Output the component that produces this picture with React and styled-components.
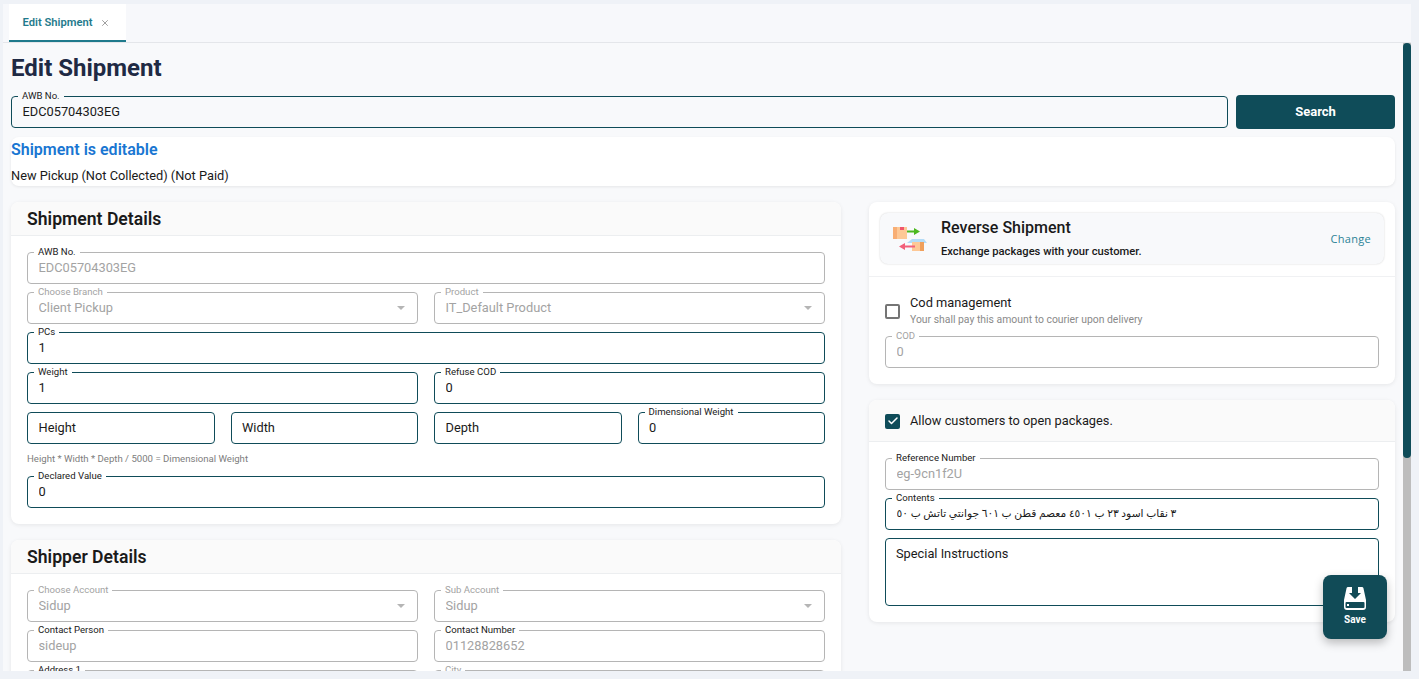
import React from 'react';
import styled, { createGlobalStyle } from 'styled-components';
import { X, Check } from 'lucide-react';

const GlobalStyle = createGlobalStyle`
  html, body {
    margin: 0;
    height: 100%;
    overflow: hidden;
    background: #eff2f7;
    font-family: Roboto, "Liberation Sans", sans-serif;
    color: #1a1a1a;
  }
  * { box-sizing: border-box; }
`;

function OutlinedField({ label, value, placeholder, disabled, select, darkLabel, arabic }) {
  return (
    <Field $disabled={disabled} $plain={!label}>
      {label && <Legend $disabled={disabled} $dark={darkLabel}>{label}</Legend>}
      <Input
        readOnly
        value={value || ''}
        placeholder={placeholder}
        $disabled={disabled}
        $plain={!label}
        $arabic={arabic}
      />
      {select && <Caret />}
    </Field>
  );
}

function ReverseIcon() {
  return (
    <svg width="36" height="28" viewBox="0 0 36 28">
      <rect x="1" y="2" width="14" height="12" fill="#fdc896" />
      <rect x="1" y="2" width="4" height="12" fill="#f8ae74" />
      <rect x="8" y="2" width="4" height="3" fill="#f0566b" />
      <path d="M15 5.5h7V3l6 3.5-6 3.500V7.500h-7z" fill="#4cb81f" />
      <path d="M20 14h12l3 4H15z" fill="#b4dcf7" />
      <rect x="20" y="17" width="12" height="9" fill="#fdc896" />
      <rect x="28" y="17" width="4" height="9" fill="#f0a05c" />
      <path d="M23 20.500h-10V18l-6 3.500 6 3.500v-2.500h10z" fill="#f2607a" />
    </svg>
  );
}

function SaveIcon() {
  return (
    <svg width="22" height="23" viewBox="0 0 22 23">
      <path
        d="M4 0h4v6H5l6 6 6-6h-3V0h4q1 0 1.400 1L22 13v7a3 3 0 0 1-3 3H3a3 3 0 0 1-3-3v-7L2.600 1Q3 0 4 0z"
        fill="#fff"
      />
      <rect x="1.500" y="15" width="19" height="6" rx="1" fill="#114b57" />
      <rect x="3" y="17" width="2" height="2" fill="#fff" />
    </svg>
  );
}

export default function App() {
  return (
    <>
      <GlobalStyle />
      <Frame>
        <TabBar>
          <Tab>
            Edit Shipment
            <X size={10} color="#666" strokeWidth={1.5} />
          </Tab>
        </TabBar>
        <Main>
          <Scroller>
            <Title>Edit Shipment</Title>
            <SearchRow>
              <OutlinedField label="AWB No." value="EDC05704303EG" darkLabel />
              <SearchButton>Search</SearchButton>
            </SearchRow>
            <StatusCard>
              <StatusTitle>Shipment is editable</StatusTitle>
              <StatusText>New Pickup (Not Collected) (Not Paid)</StatusText>
            </StatusCard>

            <Columns>
              <Column>
                <Card>
                  <CardHeader>Shipment Details</CardHeader>
                  <CardBody>
                    <OutlinedField label="AWB No." value="EDC05704303EG" disabled darkLabel />
                    <Two>
                      <OutlinedField label="Choose Branch" value="Client Pickup" disabled select />
                      <OutlinedField label="Product" value="IT_Default Product" disabled select />
                    </Two>
                    <OutlinedField label="PCs" value="1" darkLabel />
                    <Two>
                      <OutlinedField label="Weight" value="1" darkLabel />
                      <OutlinedField label="Refuse COD" value="0" darkLabel />
                    </Two>
                    <Four>
                      <OutlinedField placeholder="Height" />
                      <OutlinedField placeholder="Width" />
                      <OutlinedField placeholder="Depth" />
                      <OutlinedField label="Dimensional Weight" value="0" darkLabel />
                    </Four>
                    <HelpText>Height * Width * Depth / 5000 = Dimensional Weight</HelpText>
                    <OutlinedField label="Declared Value" value="0" darkLabel />
                  </CardBody>
                </Card>

                <Card>
                  <CardHeader>Shipper Details</CardHeader>
                  <CardBody>
                    <Two>
                      <OutlinedField label="Choose Account" value="Sidup" disabled select />
                      <OutlinedField label="Sub Account" value="Sidup" disabled select />
                    </Two>
                    <Two>
                      <OutlinedField label="Contact Person" value="sideup" disabled darkLabel />
                      <OutlinedField label="Contact Number" value="01128828652" disabled darkLabel />
                    </Two>
                    <Two>
                      <OutlinedField label="Address 1" disabled darkLabel />
                      <OutlinedField label="City" disabled />
                    </Two>
                  </CardBody>
                </Card>
              </Column>

              <Column>
                <Card>
                  <ReverseWrap>
                    <ReversePanel>
                      <IconSlot><ReverseIcon /></IconSlot>
                      <ReverseText>
                        <ReverseTitle>Reverse Shipment</ReverseTitle>
                        <ReverseSub>Exchange packages with your customer.</ReverseSub>
                      </ReverseText>
                      <ChangeLink>Change</ChangeLink>
                    </ReversePanel>
                  </ReverseWrap>
                  <CodBody>
                    <CheckRow>
                      <CheckBox />
                      <div>
                        <CheckLabel>Cod management</CheckLabel>
                        <CheckHint>Your shall pay this amount to courier upon delivery</CheckHint>
                      </div>
                    </CheckRow>
                    <OutlinedField label="COD" value="0" disabled />
                  </CodBody>
                </Card>

                <Card>
                  <AllowHeader>
                    <CheckBox $checked>
                      <Check size={12} color="#fff" strokeWidth={3} />
                    </CheckBox>
                    <CheckLabel>Allow customers to open packages.</CheckLabel>
                  </AllowHeader>
                  <CardBody>
                    <OutlinedField label="Reference Number" value="eg-9cn1f2U" disabled darkLabel />
                    <OutlinedField
                      label="Contents"
                      value="٣ نقاب اسود ٢٣ ب ٤٥٠١ معصم قطن ب ٦٠١ جوانتي تاتش ب ٥٠"
                      darkLabel
                      arabic
                    />
                    <TextArea readOnly placeholder="Special Instructions" />
                  </CardBody>
                </Card>
              </Column>
            </Columns>
          </Scroller>
          <ScrollTrack>
            <ScrollThumb />
          </ScrollTrack>
        </Main>
        <SaveButton>
          <SaveIcon />
          Save
        </SaveButton>
      </Frame>
    </>
  );
}

const Frame = styled.div`
  position: relative;
  height: 679px;
  padding: 4px 8px 8px 3px;
  display: flex;
  flex-direction: column;
`;

const TabBar = styled.div`
  flex: 0 0 38px;
  display: flex;
  padding-left: 6px;
  background: #f7f8fb;
  border-bottom: 1px solid #e4e6ea;
`;

const Tab = styled.div`
  width: 117px;
  height: 38px;
  display: flex;
  align-items: center;
  justify-content: center;
  gap: 8px;
  padding: 1px 2px 0 0;
  background: #fff;
  border-bottom: 2px solid #1f7a8c;
  color: #1f7a8c;
  font-size: 11.2px;
  font-weight: 600;
`;

const Main = styled.div`
  flex: 1;
  min-height: 0;
  display: flex;
`;

const Scroller = styled.div`
  flex: 1;
  min-width: 0;
  overflow: hidden;
  padding: 0 8px;
  background: #f8f9fb;
`;

const ScrollTrack = styled.div`
  flex: 0 0 8px;
  background: #bdbdbd;
`;

const ScrollThumb = styled.div`
  height: 415px;
  background: #0f4c59;
  border-radius: 4px;
`;

const Title = styled.h1`
  margin: 0;
  height: 48px;
  padding-top: 2px;
  display: flex;
  align-items: center;
  font-size: 24px;
  font-weight: 700;
  color: #1f2a44;
`;

const SearchRow = styled.div`
  display: grid;
  grid-template-columns: 1fr 159px;
  gap: 8px;
  align-items: end;
`;

const SearchButton = styled.button`
  height: 34px;
  margin-bottom: -1px;
  padding: 0 0 2px;
  border: none;
  border-radius: 4px;
  background: #0f4c59;
  color: #fff;
  font-family: inherit;
  font-size: 13px;
  font-weight: 700;
`;

const Field = styled.fieldset`
  position: relative;
  min-width: 0;
  height: ${(p) => (p.$plain ? '32px' : '37px')};
  margin: ${(p) => (p.$plain ? '5px 0 0' : '0')};
  padding: 0 10px;
  background: transparent;
  border: 1px solid ${(p) => (p.$disabled ? '#b5b5b5' : '#0f4c59')};
  border-radius: 4px;
`;

const Legend = styled.legend`
  height: 11px;
  margin-left: -4px;
  padding: 0 4px;
  font-size: 9.6px;
  line-height: 9px;
  color: ${(p) => (p.$disabled && !p.$dark ? '#a3a3a3' : '#1a1a1a')};
`;

const Input = styled.input`
  display: block;
  width: 100%;
  height: 30px;
  margin-top: ${(p) => (p.$plain ? '-1px' : '-6px')};
  padding: 0 0 0 0.5px;
  border: none;
  outline: none;
  background: transparent;
  font-family: Roboto, "DejaVu Sans", sans-serif;
  font-size: ${(p) => (p.$arabic ? '10.7px' : '12.8px')};
  color: ${(p) => (p.$disabled ? '#a3a3a3' : '#1a1a1a')};

  &::placeholder {
    color: #1a1a1a;
    opacity: 1;
  }
`;

const Caret = styled.span`
  position: absolute;
  right: 12px;
  top: 8px;
  border-left: 4px solid transparent;
  border-right: 4px solid transparent;
  border-top: 4px solid #b5b5b5;
`;

const StatusCard = styled.div`
  margin-top: 9px;
  height: 49px;
  background: #fff;
  border-radius: 8px;
  box-shadow: 0 1px 3px rgba(0, 0, 0, 0.08);
`;

const StatusTitle = styled.div`
  height: 26px;
  line-height: 26px;
  font-size: 16px;
  font-weight: 600;
  color: #1976d2;
`;

const StatusText = styled.div`
  line-height: 20px;
  margin-top: 3px;
  font-size: 12.8px;
`;

const Columns = styled.div`
  display: grid;
  grid-template-columns: 830px 526px;
  gap: 28px;
  margin-top: 16px;
  align-items: start;
`;

const Column = styled.div`
  display: flex;
  flex-direction: column;
  gap: 16px;
`;

const Card = styled.section`
  background: #fff;
  border-radius: 8px;
  box-shadow: 0 1px 4px rgba(0, 0, 0, 0.08);
  overflow: hidden;
`;

const CardHeader = styled.h2`
  margin: 0;
  height: 34px;
  padding-left: 16px;
  display: flex;
  align-items: center;
  background: #fafafa;
  border-bottom: 1px solid #eceef0;
  font-size: 17.6px;
  font-weight: 600;
`;

const CardBody = styled.div`
  display: flex;
  flex-direction: column;
  gap: 3px;
  padding: 11px 16px 16px;
`;

const Two = styled.div`
  display: grid;
  grid-template-columns: 1fr 1fr;
  gap: 16px;
`;

const Four = styled.div`
  display: grid;
  grid-template-columns: repeat(4, 1fr);
  gap: 16px;
`;

const HelpText = styled.div`
  height: 21px;
  padding-top: 5px;
  font-size: 9.6px;
  line-height: 14px;
  color: #7d7d7d;
`;

const ReverseWrap = styled.div`
  padding: 11px 11px 12px;
  border-bottom: 1px solid #f0f1f3;
`;

const ReversePanel = styled.div`
  height: 51px;
  display: flex;
  align-items: center;
  padding: 0 13px 0 12px;
  background: #f8f9fb;
  border-radius: 8px;
  box-shadow: 0 0 2px rgba(0, 0, 0, 0.18);
`;

const IconSlot = styled.div`
  width: 49px;
  display: flex;
`;

const ReverseText = styled.div`
  flex: 1;
  margin-top: -1px;
`;

const ReverseTitle = styled.div`
  font-size: 16px;
  font-weight: 500;
  line-height: 20px;
`;

const ReverseSub = styled.div`
  margin-top: 7px;
  font-size: 11.2px;
  font-weight: 500;
  line-height: 14px;
`;

const ChangeLink = styled.span`
  font-family: "Open Sans", sans-serif;
  font-size: 11px;
  letter-spacing: 0.3px;
  color: #2b8296;
`;

const CodBody = styled.div`
  display: flex;
  flex-direction: column;
  gap: 3px;
  padding: 17px 16px 16px;
`;

const CheckRow = styled.div`
  display: flex;
  align-items: center;
  gap: 10px;
`;

const CheckBox = styled.span`
  flex: none;
  width: 15px;
  height: 15px;
  display: flex;
  align-items: center;
  justify-content: center;
  border-radius: 2px;
  background: ${(p) => (p.$checked ? '#0f4c59' : '#fff')};
  border: ${(p) => (p.$checked ? 'none' : '2px solid #757575')};
`;

const CheckLabel = styled.div`
  font-size: 12.8px;
  line-height: 18px;
`;

const CheckHint = styled.div`
  font-size: 10.4px;
  line-height: 16px;
  color: #8a8a8a;
`;

const AllowHeader = styled.div`
  height: 42px;
  display: flex;
  align-items: center;
  gap: 10px;
  padding: 1px 0 0 16px;
  background: #fafafa;
  border-bottom: 1px solid #eceef0;
`;

const TextArea = styled.textarea`
  height: 68px;
  margin-top: 5px;
  padding: 7px 10px;
  resize: none;
  outline: none;
  border: 1px solid #0f4c59;
  border-radius: 4px;
  font-family: inherit;
  font-size: 12.8px;

  &::placeholder {
    color: #1a1a1a;
    opacity: 1;
  }
`;

const SaveButton = styled.button`
  position: absolute;
  left: 1323px;
  top: 575px;
  width: 64px;
  height: 64px;
  display: flex;
  flex-direction: column;
  align-items: center;
  gap: 4px;
  padding: 12px 0 0;
  border: none;
  border-radius: 8px;
  background: #114b57;
  box-shadow: 0 4px 10px rgba(0, 0, 0, 0.25);
  color: #fff;
  font-family: inherit;
  font-size: 10px;
  font-weight: 700;
`;
